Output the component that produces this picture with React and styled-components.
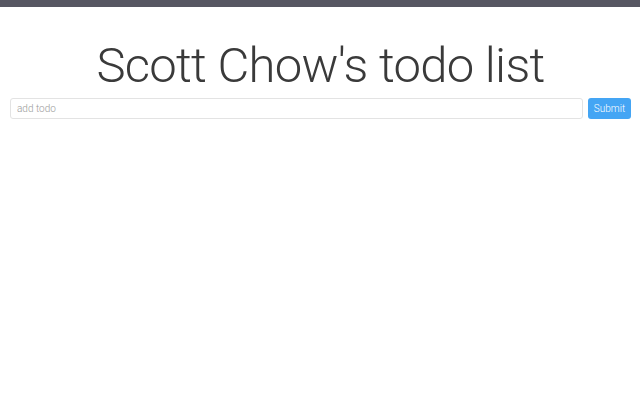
import React, { useState } from "react";
import styled, { createGlobalStyle } from "styled-components";

const GlobalStyle = createGlobalStyle`
  html, body {
    margin: 0;
    padding: 0;
    background: #fff;
    font-family: "Roboto", "Liberation Sans", sans-serif;
  }
`;

const TopBar = styled.div`
  height: 7px;
  background: #575762;
`;

const Page = styled.div`
  padding: 0 9px 0 10px;
`;

const Title = styled.h1`
  margin: 0;
  padding-top: 28px;
  height: 63px;
  text-align: center;
  font-family: "Roboto", "Liberation Sans", sans-serif;
  font-weight: 300;
  font-size: 49px;
  letter-spacing: -0.7px;
  line-height: 61px;
  color: #3a3a3a;
`;

const Form = styled.form`
  display: flex;
  gap: 5px;
`;

const Input = styled.input`
  flex: 1;
  height: 21px;
  box-sizing: border-box;
  border: 1px solid #e3e3e3;
  border-radius: 3px;
  padding: 0 6px;
  font-family: "Roboto", "Liberation Sans", sans-serif;
  font-size: 10px;
  font-weight: 300;
  color: #555;
  outline: none;

  &::placeholder {
    color: #999;
  }
`;

const Button = styled.button`
  width: 43px;
  height: 21px;
  box-sizing: border-box;
  border: none;
  border-radius: 3px;
  background: #44a5f4;
  color: #fff;
  font-family: "Roboto", "Liberation Sans", sans-serif;
  font-size: 10px;
  font-weight: 300;
  padding: 0;
`;

const App = () => {
  const [todo, setTodo] = useState("");
  return (
    <>
      <GlobalStyle />
      <TopBar />
      <Page>
        <Title>Scott Chow's todo list</Title>
        <Form onSubmit={(e) => e.preventDefault()}>
          <Input
            placeholder="add todo"
            value={todo}
            onChange={(e) => setTodo(e.target.value)}
          />
          <Button type="submit">Submit</Button>
        </Form>
      </Page>
    </>
  );
};

export default App;
